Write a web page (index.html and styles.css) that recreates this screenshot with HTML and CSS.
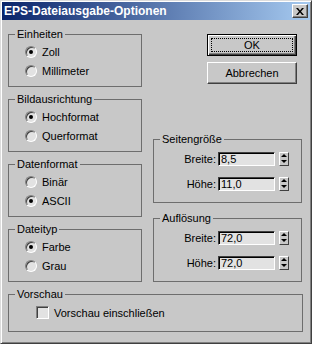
FILE: index.html
```html
<!DOCTYPE html>
<html lang="de">
<head>
  <meta charset="UTF-8">
  <title>EPS-Dateiausgabe-Optionen</title>
  <link rel="stylesheet" href="styles.css">
</head>
<body>
  <div class="window">
    <div class="titlebar">
      <span class="title">EPS-Dateiausgabe-Optionen</span>
      <button class="close">
        <svg width="8" height="7" viewBox="0 0 8 7"><path d="M0 0h2l2 2.5 2-2.5h2l-3 3.5 3 3.5h-2l-2-2.5-2 2.5h-2l3-3.5z" fill="#000"/></svg>
      </button>
    </div>

    <div class="content">
      <div class="columns">
        <!-- left: radio groups -->
        <div class="col-left">
          <div class="group group-radio">
            <div class="group-title">Einheiten</div>
            <label class="radio"><span class="radio-box checked"></span>Zoll</label>
            <label class="radio"><span class="radio-box"></span>Millimeter</label>
          </div>
          <div class="group group-radio">
            <div class="group-title">Bildausrichtung</div>
            <label class="radio"><span class="radio-box checked"></span>Hochformat</label>
            <label class="radio"><span class="radio-box"></span>Querformat</label>
          </div>
          <div class="group group-radio">
            <div class="group-title">Datenformat</div>
            <label class="radio"><span class="radio-box"></span>Binär</label>
            <label class="radio"><span class="radio-box checked"></span>ASCII</label>
          </div>
          <div class="group group-radio">
            <div class="group-title">Dateityp</div>
            <label class="radio"><span class="radio-box checked"></span>Farbe</label>
            <label class="radio"><span class="radio-box"></span>Grau</label>
          </div>
        </div>

        <!-- right: buttons and spinners -->
        <div class="col-right">
          <button class="btn btn-default"><span class="focus">OK</span></button>
          <button class="btn">Abbrechen</button>

          <div class="group group-spin group-page">
            <div class="group-title">Seitengröße</div>
            <div class="spin-row">
              <span class="spin-label">Breite:</span>
              <span class="field">8,5</span>
              <span class="spinner"><span class="arrow-up"></span><span class="arrow-down"></span></span>
            </div>
            <div class="spin-row">
              <span class="spin-label">Höhe:</span>
              <span class="field">11,0</span>
              <span class="spinner"><span class="arrow-up"></span><span class="arrow-down"></span></span>
            </div>
          </div>

          <div class="group group-spin group-res">
            <div class="group-title">Auflösung</div>
            <div class="spin-row">
              <span class="spin-label">Breite:</span>
              <span class="field">72,0</span>
              <span class="spinner"><span class="arrow-up"></span><span class="arrow-down"></span></span>
            </div>
            <div class="spin-row">
              <span class="spin-label">Höhe:</span>
              <span class="field">72,0</span>
              <span class="spinner"><span class="arrow-up"></span><span class="arrow-down"></span></span>
            </div>
          </div>
        </div>
      </div>

      <div class="group group-preview">
        <div class="group-title">Vorschau</div>
        <label class="check"><span class="check-box"></span>Vorschau einschließen</label>
      </div>
    </div>
  </div>
</body>
</html>
```

FILE: styles.css
```css
* {
  box-sizing: border-box;
}

body {
  margin: 0;
  font-family: "Liberation Sans", Arial, sans-serif;
  font-size: 11px;
  color: #000;
  background: #c8c8c8;
}

.window {
  width: 312px;
  height: 344px;
  padding: 1px;
  background: #c8c8c8;
  border: 1px solid;
  border-color: #dcdcdc #404040 #404040 #dcdcdc;
  box-shadow: inset 1px 1px #fff, inset -1px -1px #808080;
}

.titlebar {
  display: flex;
  align-items: center;
  justify-content: space-between;
  height: 18px;
  padding: 0 2px;
  background: linear-gradient(to right, #0a246a, #a6caf0);
}

.title {
  color: #fff;
  font-weight: bold;
  font-size: 12px;
}

.close {
  display: flex;
  align-items: center;
  justify-content: center;
  width: 16px;
  height: 14px;
  padding: 0;
  background: #c8c8c8;
  border: 1px solid;
  border-color: #fff #404040 #404040 #fff;
  box-shadow: inset -1px -1px #808080;
}

.content {
  padding: 14px 7px 0 6px;
}

.columns {
  display: flex;
  gap: 11px;
}

.col-left {
  width: 134px;
  display: flex;
  flex-direction: column;
  gap: 12px;
}

.col-right {
  width: 149px;
  display: flex;
  flex-direction: column;
}

/* group box */
.group {
  border: 1px solid #6e6e6e;
}

.group-title {
  display: table;
  margin: -7px 0 0 6px;
  padding: 0 2px;
  line-height: 13px;
  background: #c8c8c8;
}

.group-radio {
  height: 53px;
}

/* radio buttons */
.radio {
  display: flex;
  align-items: center;
  height: 19px;
  padding-left: 16px;
}

.radio:first-of-type {
  margin-top: 1px;
}

.radio-box {
  position: relative;
  width: 12px;
  height: 12px;
  margin-right: 5px;
  border-radius: 50%;
  background: #e2e2e2;
  border: 1px solid;
  border-color: #808080 #fff #fff #808080;
  box-shadow: inset 1px 1px #404040;
}

.radio-box.checked::after {
  content: "";
  position: absolute;
  left: 3px;
  top: 3px;
  width: 4px;
  height: 4px;
  border-radius: 50%;
  background: #000;
}

/* buttons */
.btn {
  display: flex;
  align-items: center;
  justify-content: center;
  width: 90px;
  height: 22px;
  margin-left: 54px;
  padding: 0;
  font: inherit;
  color: #000;
  background: #c8c8c8;
  border: 1px solid;
  border-color: #fff #404040 #404040 #fff;
  box-shadow: inset -1px -1px #808080;
}

.btn + .btn {
  margin-top: 6px;
}

.btn-default {
  border-color: #000;
  box-shadow: inset 1px 1px #fff, inset -1px -1px #404040, inset -2px -2px #808080;
}

.focus {
  display: flex;
  align-items: center;
  justify-content: center;
  width: 82px;
  height: 14px;
  border: 1px dotted #000;
}

/* spinner groups */
.group-spin {
  height: 64px;
}

.group-page {
  margin-top: 55px;
}

.group-res {
  margin-top: 15px;
}

.spin-row {
  display: flex;
  align-items: center;
  justify-content: flex-end;
  height: 25px;
  padding-right: 12px;
}

.spin-row:first-of-type {
  margin-top: 2px;
}

.spin-label {
  margin-right: 2px;
}

.field {
  display: flex;
  align-items: center;
  width: 57px;
  height: 14px;
  padding-left: 2px;
  background: #e2e2e2;
  border: 1px solid;
  border-color: #404040 #fff #fff #404040;
  box-shadow: inset 1px 1px #000;
}

.spinner {
  display: flex;
  flex-direction: column;
  align-items: center;
  justify-content: space-around;
  width: 10px;
  height: 14px;
  margin-left: 4px;
  background: #c8c8c8;
  border: 1px solid;
  border-color: #fff #404040 #404040 #fff;
}

.arrow-up {
  border-left: 3px solid transparent;
  border-right: 3px solid transparent;
  border-bottom: 3px solid #000;
}

.arrow-down {
  border-left: 3px solid transparent;
  border-right: 3px solid transparent;
  border-top: 3px solid #000;
}

/* preview */
.group-preview {
  height: 38px;
  margin-top: 12px;
}

.check {
  display: flex;
  align-items: center;
  margin-top: 5px;
  padding-left: 27px;
}

.check-box {
  width: 13px;
  height: 13px;
  margin-right: 5px;
  background: #e2e2e2;
  border: 1px solid;
  border-color: #808080 #fff #fff #808080;
  box-shadow: inset 1px 1px #404040;
}
```
